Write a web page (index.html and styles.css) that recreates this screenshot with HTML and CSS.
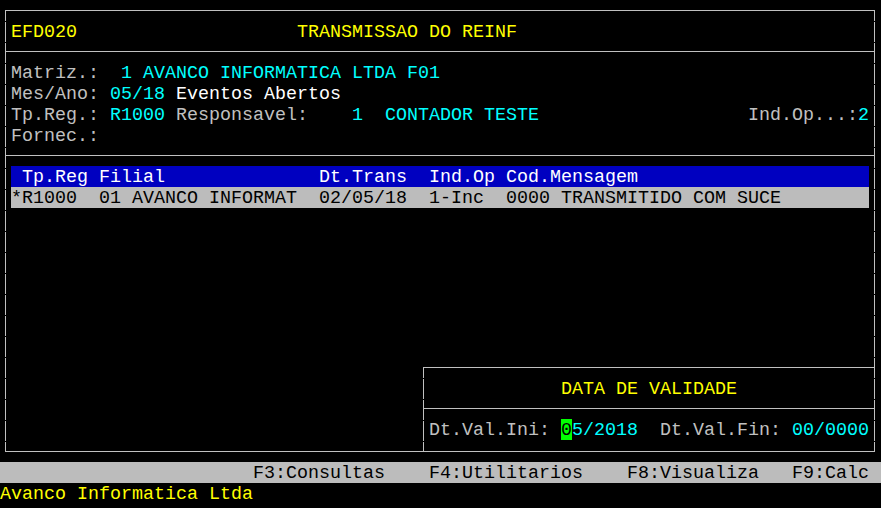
FILE: index.html
```html
<!doctype html>
<html lang="pt">
<head>
<meta charset="utf-8">
<meta name="viewport" content="width=device-width,initial-scale=1">
<title>EFD020 – Transmissao do REINF</title>
<link rel="stylesheet" href="styles.css">
</head>
<body>

<div class="screen">
  <div class="frame">
    <div class="row yel">EFD020                    TRANSMISSAO DO REINF</div>
    <div class="sep"></div>
    <div class="row">Matriz.:<span class="cy">  1 AVANCO INFORMATICA LTDA F01</span></div>
    <div class="row">Mes/Ano: <span class="cy">05/18</span> <span class="wh">Eventos Abertos</span></div>
    <div class="row split"><span>Tp.Reg.: <span class="cy">R1000</span> Responsavel:    <span class="cy">1  CONTADOR TESTE</span></span><span>Ind.Op...:<span class="cy">2</span></span></div>
    <div class="row">Fornec.:</div>
    <div class="sep"></div>

    <!-- lista de eventos -->
    <div class="grid head">
      <span> Tp.Reg</span><span>Filial</span><span>Dt.Trans</span><span>Ind.Op</span><span>Cod.Mensagem</span>
    </div>
    <div class="grid sel">
      <span>*R1000</span><span>01 AVANCO INFORMAT</span><span>02/05/18</span><span>1-Inc</span><span>0000 TRANSMITIDO COM SUCE</span>
    </div>
  </div>

  <!-- janela sobreposta: data de validade -->
  <div class="dialog">
    <div class="row yel center">DATA DE VALIDADE</div>
    <div class="sep"></div>
    <div class="row">Dt.Val.Ini: <span class="cursor">0</span><span class="cy">5/2018</span>  Dt.Val.Fin: <span class="cy">00/0000</span></div>
  </div>

  <div class="fkeys">                       F3:Consultas    F4:Utilitarios    F8:Visualiza   F9:Calc</div>
  <div class="status">Avanco Informatica Ltda</div>
</div>

</body>
</html>
```

FILE: styles.css
```css
:root{
  --gry:#c0c0c0; --yel:#ffff00; --cy:#00ffff; --wh:#ffffff; --blu:#0000c0; --bar:#bcbcbc;
  --vline:linear-gradient(transparent 1px,var(--gry) 1px);
}
*{box-sizing:border-box;margin:0;padding:0}
body{background:#000;color:var(--gry);font:18.33px/21px 'Liberation Mono','DejaVu Sans Mono',monospace}
.screen{position:relative;width:881px;height:508px;overflow:hidden}

/* caixas com linhas de moldura (verticais com pequenos cortes por linha) */
.frame,.dialog{
  border-top:1px solid var(--gry);border-bottom:1px solid var(--gry);
  padding:10px 6px;
  background:var(--vline) left top 10px/1px 21px repeat-y,
             var(--vline) right top 10px/1px 21px repeat-y,#000;
}
.frame{margin:10px 0 0 5px;width:870px;height:442px}
.dialog{position:absolute;left:423px;top:367px;width:452px;height:85px}

.sep{height:10px;margin:0 -6px 10px;border-bottom:1px solid var(--gry)}

/* cada linha do terminal = 21px; texto 1px abaixo do centro */
.row,.grid,.fkeys,.status{height:21px;padding-top:1px}
.row{white-space:pre}
.split{display:flex;justify-content:space-between}
.center{text-align:center}

.yel{color:var(--yel)}
.cy{color:var(--cy)}
.wh{color:var(--wh)}
.cursor{background:#00ff00;color:#000;display:inline-block;height:21px;margin-top:-1px;padding-top:1px;vertical-align:top}

.grid{display:grid;grid-template-columns:8ch 20ch 10ch 7ch 1fr}
.grid span{white-space:pre}
.head{background:var(--blu);color:var(--wh)}
.sel{background:var(--bar);color:#000}

.fkeys{margin-top:10px;background:var(--bar);color:#000;white-space:pre}
.status{color:var(--yel);white-space:pre}
```
